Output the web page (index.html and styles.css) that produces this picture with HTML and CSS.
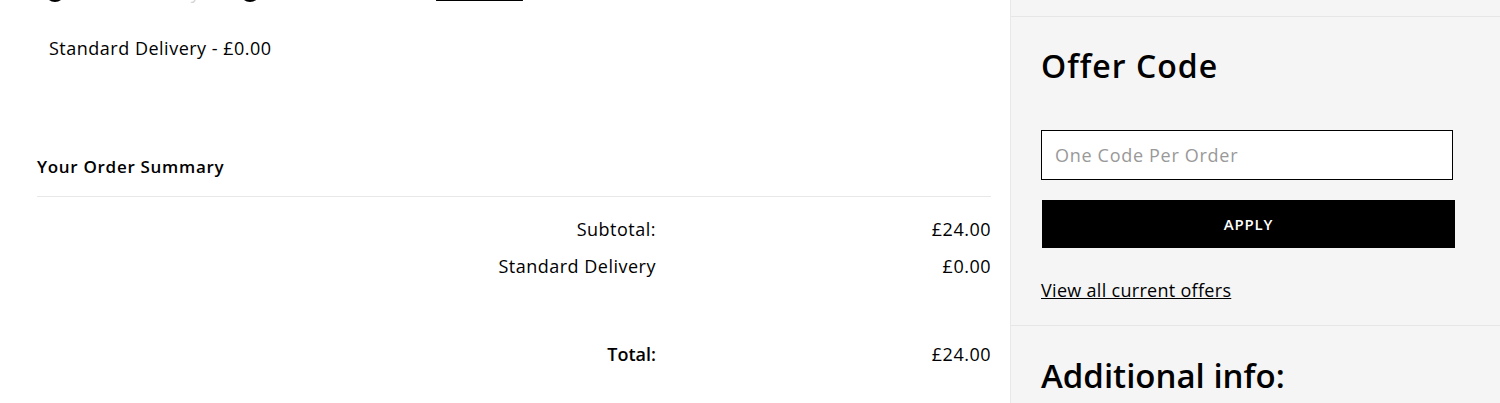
FILE: index.html
```html
<!DOCTYPE html>
<html lang="en">
<head>
<meta charset="utf-8">
<title>Checkout</title>
<link rel="stylesheet" href="styles.css">
</head>
<body>
<div class="page">
  <main class="main">
    <div class="delivery-options">
      <label class="option"><span class="radio"></span><span class="option-text">Home Delivery</span></label>
      <label class="option"><span class="radio"></span><span class="option-text">Click &amp; Collect</span></label>
      <a class="change-link" href="#">Find store</a>
    </div>
    <p class="delivery-choice">Standard Delivery - £0.00</p>

    <section class="summary">
      <h2 class="summary-title">Your Order Summary</h2>
      <div class="summary-rows">
        <div class="row">
          <span class="label">Subtotal:</span>
          <span class="value">£24.00</span>
        </div>
        <div class="row">
          <span class="label">Standard Delivery</span>
          <span class="value">£0.00</span>
        </div>
        <div class="row total">
          <span class="label">Total:</span>
          <span class="value">£24.00</span>
        </div>
      </div>
    </section>
  </main>

  <aside class="panel">
    <div class="panel-top"></div>
    <section class="offer">
      <h2 class="offer-title">Offer Code</h2>
      <input class="offer-input" type="text" placeholder="One Code Per Order">
      <button class="apply-btn" type="button">APPLY</button>
      <a class="offers-link" href="#">View all current offers</a>
    </section>
    <section class="additional">
      <h2 class="additional-title">Additional info:</h2>
    </section>
  </aside>
</div>
</body>
</html>
```

FILE: styles.css
```css
* { box-sizing: border-box; }

html, body {
  margin: 0;
  padding: 0;
  background: #ffffff;
  overflow: hidden;
}

body {
  font-family: "Open Sans", "Noto Sans", sans-serif;
  color: #000;
}

.page {
  display: flex;
  height: 403px;
}

.main {
  width: 1010px;
  flex: none;
  padding: 0 19px 0 37px;
}

.delivery-options {
  display: flex;
  align-items: center;
  height: 24px;
  margin-top: -20px;
  padding-left: 8px;
}

.option {
  display: flex;
  align-items: center;
  gap: 8px;
  margin-right: 40px;
}

.option + .option {
  margin-right: 46px;
}

.radio {
  width: 20px;
  height: 20px;
  border: 2px solid #000;
  border-radius: 50%;
}

.option-text {
  font-size: 18px;
  letter-spacing: 0.3px;
  color: #d4d4d4;
}

.change-link {
  font-size: 18px;
  letter-spacing: 0.3px;
  color: #000;
  text-decoration: underline;
}

.delivery-choice {
  margin: 32px 0 0 12px;
  font-size: 18px;
  letter-spacing: 0.5px;
  line-height: 24px;
}

.summary {
  margin-top: 95px;
}

.summary-title {
  margin: 0;
  font-size: 17px;
  font-weight: 600;
  letter-spacing: 0.7px;
  line-height: 24px;
  padding-bottom: 17px;
  border-bottom: 1px solid #e8e8e8;
}

.summary-rows {
  display: flex;
  flex-direction: column;
  padding-top: 20px;
}

.row {
  display: grid;
  grid-template-columns: 619px 1fr;
  font-size: 18px;
  letter-spacing: 0.5px;
  line-height: 24px;
  margin-bottom: 13px;
}

.row .label,
.row .value {
  text-align: right;
}

.row.total {
  margin-top: 51px;
}

.row.total .label {
  font-weight: 600;
  letter-spacing: 0;
}

.panel {
  flex: 1;
  background: #f5f5f5;
  border-left: 1px solid #e8e8e8;
}

.panel-top {
  height: 17px;
  border-bottom: 1px solid #e6e6e6;
}

.offer {
  display: flex;
  flex-direction: column;
  align-items: flex-start;
  padding: 29px 30px 23px 30px;
  border-bottom: 1px solid #e6e6e6;
}

.offer-title {
  margin: 0;
  font-size: 32px;
  font-weight: 600;
  letter-spacing: 1px;
  line-height: 40px;
}

.offer-input {
  margin-top: 44px;
  width: 412px;
  height: 50px;
  border: 1px solid #000;
  background: #fff;
  padding: 0 13px;
  font-family: inherit;
  font-size: 18px;
  letter-spacing: 0.7px;
  outline: none;
}

.offer-input::placeholder {
  color: #999;
}

.apply-btn {
  margin-top: 20px;
  margin-left: 1px;
  width: 413px;
  height: 48px;
  border: none;
  background: #000;
  color: #fff;
  font-family: inherit;
  font-size: 15px;
  font-weight: 600;
  letter-spacing: 0.8px;
}

.offers-link {
  margin-top: 30px;
  font-size: 18px;
  letter-spacing: 0.3px;
  line-height: 24px;
  color: #000;
  text-decoration: underline;
}

.additional {
  padding: 28px 30px 0 30px;
}

.additional-title {
  margin: 0;
  font-size: 33px;
  font-weight: 600;
  line-height: 44px;
}
```
